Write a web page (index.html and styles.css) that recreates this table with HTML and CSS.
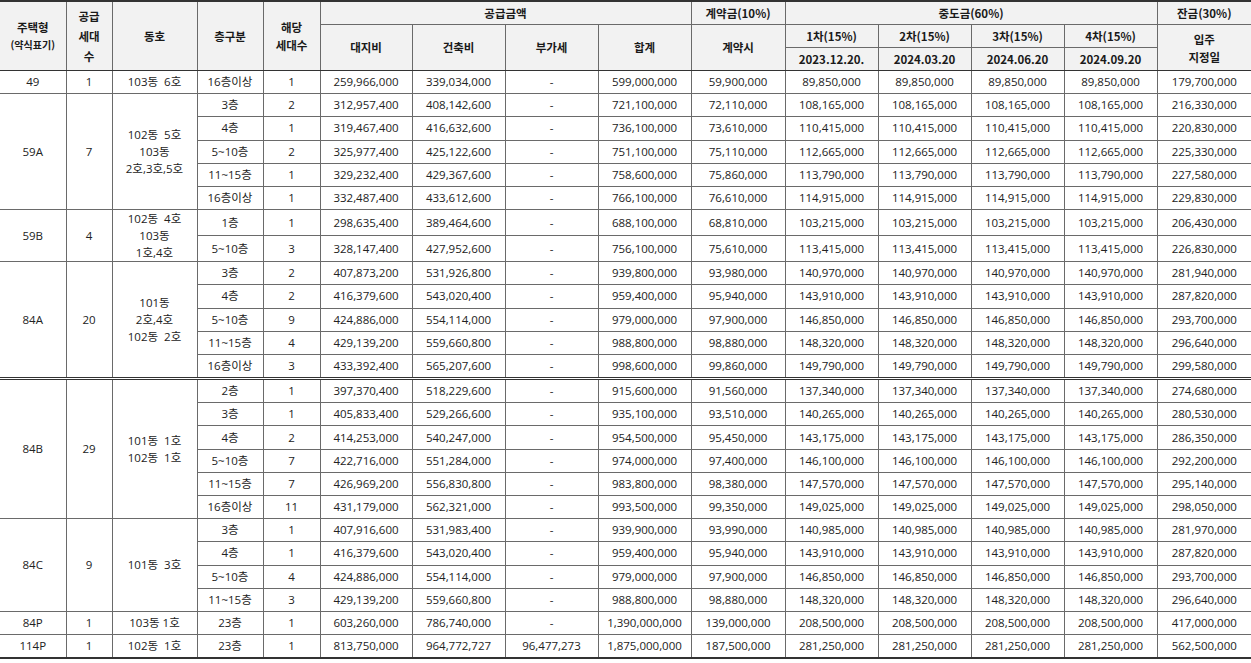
FILE: index.html
```html
<!DOCTYPE html>
<html lang="ko">
<head>
<meta charset="utf-8">
<link rel="stylesheet" href="styles.css">
</head>
<body>
<table class="price">
<colgroup>
<col class="c1"><col class="c2"><col class="c3"><col class="c4"><col class="c5">
<col class="c6"><col class="c7"><col class="c8"><col class="c9"><col class="c10">
<col class="c11"><col class="c12"><col class="c13"><col class="c14"><col class="c15">
</colgroup>
<thead>
<tr class="h1">
<th rowspan="3">주택형<br><span class="small">(약식표기)</span></th>
<th rowspan="3" class="tall">공급<br>세대<br>수</th>
<th rowspan="3">동호</th>
<th rowspan="3">층구분</th>
<th rowspan="3" class="mid">해당<br>세대수</th>
<th colspan="4">공급금액</th>
<th>계약금(10%)</th>
<th colspan="4">중도금(60%)</th>
<th>잔금(30%)</th>
</tr>
<tr class="h2">
<th rowspan="2">대지비</th>
<th rowspan="2">건축비</th>
<th rowspan="2">부가세</th>
<th rowspan="2">합계</th>
<th rowspan="2">계약시</th>
<th>1차(15%)</th><th>2차(15%)</th><th>3차(15%)</th><th>4차(15%)</th>
<th rowspan="2" class="mid">입주<br>지정일</th>
</tr>
<tr class="h3">
<th>2023.12.20.</th><th>2024.03.20</th><th>2024.06.20</th><th>2024.09.20</th>
</tr>
</thead>
<tbody>
<tr class="grp"><td>49</td><td>1</td><td class="pre">103동  6호</td><td>16층이상</td><td>1</td><td>259,966,000</td><td>339,034,000</td><td>-</td><td>599,000,000</td><td>59,900,000</td><td>89,850,000</td><td>89,850,000</td><td>89,850,000</td><td>89,850,000</td><td>179,700,000</td></tr>

<tr class="grp"><td rowspan="5">59A</td><td rowspan="5">7</td><td rowspan="5" class="pre multi">102동  5호<br>103동<br>2호,3호,5호</td><td>3층</td><td>2</td><td>312,957,400</td><td>408,142,600</td><td>-</td><td>721,100,000</td><td>72,110,000</td><td>108,165,000</td><td>108,165,000</td><td>108,165,000</td><td>108,165,000</td><td>216,330,000</td></tr>
<tr><td>4층</td><td>1</td><td>319,467,400</td><td>416,632,600</td><td>-</td><td>736,100,000</td><td>73,610,000</td><td>110,415,000</td><td>110,415,000</td><td>110,415,000</td><td>110,415,000</td><td>220,830,000</td></tr>
<tr><td>5~10층</td><td>2</td><td>325,977,400</td><td>425,122,600</td><td>-</td><td>751,100,000</td><td>75,110,000</td><td>112,665,000</td><td>112,665,000</td><td>112,665,000</td><td>112,665,000</td><td>225,330,000</td></tr>
<tr><td>11~15층</td><td>1</td><td>329,232,400</td><td>429,367,600</td><td>-</td><td>758,600,000</td><td>75,860,000</td><td>113,790,000</td><td>113,790,000</td><td>113,790,000</td><td>113,790,000</td><td>227,580,000</td></tr>
<tr><td>16층이상</td><td>1</td><td>332,487,400</td><td>433,612,600</td><td>-</td><td>766,100,000</td><td>76,610,000</td><td>114,915,000</td><td>114,915,000</td><td>114,915,000</td><td>114,915,000</td><td>229,830,000</td></tr>

<tr class="grp tallrow"><td rowspan="2">59B</td><td rowspan="2">4</td><td rowspan="2" class="pre multi">102동  4호<br>103동<br>1호,4호</td><td>1층</td><td>1</td><td>298,635,400</td><td>389,464,600</td><td>-</td><td>688,100,000</td><td>68,810,000</td><td>103,215,000</td><td>103,215,000</td><td>103,215,000</td><td>103,215,000</td><td>206,430,000</td></tr>
<tr class="tallrow"><td>5~10층</td><td>3</td><td>328,147,400</td><td>427,952,600</td><td>-</td><td>756,100,000</td><td>75,610,000</td><td>113,415,000</td><td>113,415,000</td><td>113,415,000</td><td>113,415,000</td><td>226,830,000</td></tr>

<tr class="grp"><td rowspan="5">84A</td><td rowspan="5">20</td><td rowspan="5" class="pre multi">101동<br>2호,4호<br>102동  2호</td><td>3층</td><td>2</td><td>407,873,200</td><td>531,926,800</td><td>-</td><td>939,800,000</td><td>93,980,000</td><td>140,970,000</td><td>140,970,000</td><td>140,970,000</td><td>140,970,000</td><td>281,940,000</td></tr>
<tr><td>4층</td><td>2</td><td>416,379,600</td><td>543,020,400</td><td>-</td><td>959,400,000</td><td>95,940,000</td><td>143,910,000</td><td>143,910,000</td><td>143,910,000</td><td>143,910,000</td><td>287,820,000</td></tr>
<tr><td>5~10층</td><td>9</td><td>424,886,000</td><td>554,114,000</td><td>-</td><td>979,000,000</td><td>97,900,000</td><td>146,850,000</td><td>146,850,000</td><td>146,850,000</td><td>146,850,000</td><td>293,700,000</td></tr>
<tr><td>11~15층</td><td>4</td><td>429,139,200</td><td>559,660,800</td><td>-</td><td>988,800,000</td><td>98,880,000</td><td>148,320,000</td><td>148,320,000</td><td>148,320,000</td><td>148,320,000</td><td>296,640,000</td></tr>
<tr><td>16층이상</td><td>3</td><td>433,392,400</td><td>565,207,600</td><td>-</td><td>998,600,000</td><td>99,860,000</td><td>149,790,000</td><td>149,790,000</td><td>149,790,000</td><td>149,790,000</td><td>299,580,000</td></tr>

<tr class="grp dbl"><td rowspan="6">84B</td><td rowspan="6">29</td><td rowspan="6" class="pre multi">101동  1호<br>102동  1호</td><td>2층</td><td>1</td><td>397,370,400</td><td>518,229,600</td><td>-</td><td>915,600,000</td><td>91,560,000</td><td>137,340,000</td><td>137,340,000</td><td>137,340,000</td><td>137,340,000</td><td>274,680,000</td></tr>
<tr><td>3층</td><td>1</td><td>405,833,400</td><td>529,266,600</td><td>-</td><td>935,100,000</td><td>93,510,000</td><td>140,265,000</td><td>140,265,000</td><td>140,265,000</td><td>140,265,000</td><td>280,530,000</td></tr>
<tr><td>4층</td><td>2</td><td>414,253,000</td><td>540,247,000</td><td>-</td><td>954,500,000</td><td>95,450,000</td><td>143,175,000</td><td>143,175,000</td><td>143,175,000</td><td>143,175,000</td><td>286,350,000</td></tr>
<tr><td>5~10층</td><td>7</td><td>422,716,000</td><td>551,284,000</td><td>-</td><td>974,000,000</td><td>97,400,000</td><td>146,100,000</td><td>146,100,000</td><td>146,100,000</td><td>146,100,000</td><td>292,200,000</td></tr>
<tr><td>11~15층</td><td>7</td><td>426,969,200</td><td>556,830,800</td><td>-</td><td>983,800,000</td><td>98,380,000</td><td>147,570,000</td><td>147,570,000</td><td>147,570,000</td><td>147,570,000</td><td>295,140,000</td></tr>
<tr><td>16층이상</td><td>11</td><td>431,179,000</td><td>562,321,000</td><td>-</td><td>993,500,000</td><td>99,350,000</td><td>149,025,000</td><td>149,025,000</td><td>149,025,000</td><td>149,025,000</td><td>298,050,000</td></tr>

<tr class="grp"><td rowspan="4">84C</td><td rowspan="4">9</td><td rowspan="4" class="pre">101동  3호</td><td>3층</td><td>1</td><td>407,916,600</td><td>531,983,400</td><td>-</td><td>939,900,000</td><td>93,990,000</td><td>140,985,000</td><td>140,985,000</td><td>140,985,000</td><td>140,985,000</td><td>281,970,000</td></tr>
<tr><td>4층</td><td>1</td><td>416,379,600</td><td>543,020,400</td><td>-</td><td>959,400,000</td><td>95,940,000</td><td>143,910,000</td><td>143,910,000</td><td>143,910,000</td><td>143,910,000</td><td>287,820,000</td></tr>
<tr><td>5~10층</td><td>4</td><td>424,886,000</td><td>554,114,000</td><td>-</td><td>979,000,000</td><td>97,900,000</td><td>146,850,000</td><td>146,850,000</td><td>146,850,000</td><td>146,850,000</td><td>293,700,000</td></tr>
<tr><td>11~15층</td><td>3</td><td>429,139,200</td><td>559,660,800</td><td>-</td><td>988,800,000</td><td>98,880,000</td><td>148,320,000</td><td>148,320,000</td><td>148,320,000</td><td>148,320,000</td><td>296,640,000</td></tr>

<tr class="grp"><td>84P</td><td>1</td><td>103동 1호</td><td>23층</td><td>1</td><td>603,260,000</td><td>786,740,000</td><td>-</td><td>1,390,000,000</td><td>139,000,000</td><td>208,500,000</td><td>208,500,000</td><td>208,500,000</td><td>208,500,000</td><td>417,000,000</td></tr>
<tr class="grp last"><td>114P</td><td>1</td><td class="pre">102동  1호</td><td>23층</td><td>1</td><td>813,750,000</td><td>964,772,727</td><td>96,477,273</td><td>1,875,000,000</td><td>187,500,000</td><td>281,250,000</td><td>281,250,000</td><td>281,250,000</td><td>281,250,000</td><td>562,500,000</td></tr>
</tbody>
</table>
</body>
</html>
```
FILE: styles.css
```css
html, body {
  margin: 0;
  padding: 0;
  background: #ffffff;
}
body {
  font-family: "Open Sans", "Noto Sans CJK KR", sans-serif;
  font-size: 11.5px;
  color: #222222;
}
.price {
  width: 1251px;
  table-layout: fixed;
  border-collapse: collapse;
}
.c1 { width: 66px; }
.c2 { width: 46px; }
.c3 { width: 85px; }
.c4 { width: 66px; }
.c5 { width: 57px; }
.c6 { width: 92px; }
.c7, .c8, .c9, .c11, .c12, .c13, .c14 { width: 93px; }
.c10 { width: 94px; }
.c15 { width: 94px; }
th, td {
  border: 1px solid #6a6a6a;
  padding: 0;
  text-align: center;
  vertical-align: middle;
  white-space: nowrap;
  overflow: hidden;
}
th:first-child, td:first-child { border-left: none; }
th:last-child, td:last-child { border-right: none; }
th {
  background: #f2f2f2;
  font-family: "Noto Sans CJK KR", "Open Sans", sans-serif;
  font-weight: 700;
  font-size: 11.5px;
  line-height: 17px;
  color: #1a1a1a;
}
.h1 th { border-top: 2px solid #333333; }
.h1, .h2, .h3 { height: 23px; }
.h1 th, .h2 th, .h3 th { height: 22px; }
.small { font-size: 10px; }
th.tall { line-height: 20px; }
th.mid { line-height: 18px; }
thead tr:last-child th, thead th[rowspan="3"], .h2 th[rowspan="2"] { border-bottom: 1px solid #333333; }
td {
  height: 22.2px;
  line-height: 16px;
  font-family: "Open Sans", "Noto Sans CJK KR", sans-serif;
}
td.pre { white-space: pre; }
td.multi { line-height: 17px; }
tr.tallrow td { height: 25px; }
tr.grp td { border-top: 1px solid #3a3a3a; }
tr.dbl td { border-top: 3px double #333333; }
tr.last td { border-bottom: 2px solid #333333; }
```
